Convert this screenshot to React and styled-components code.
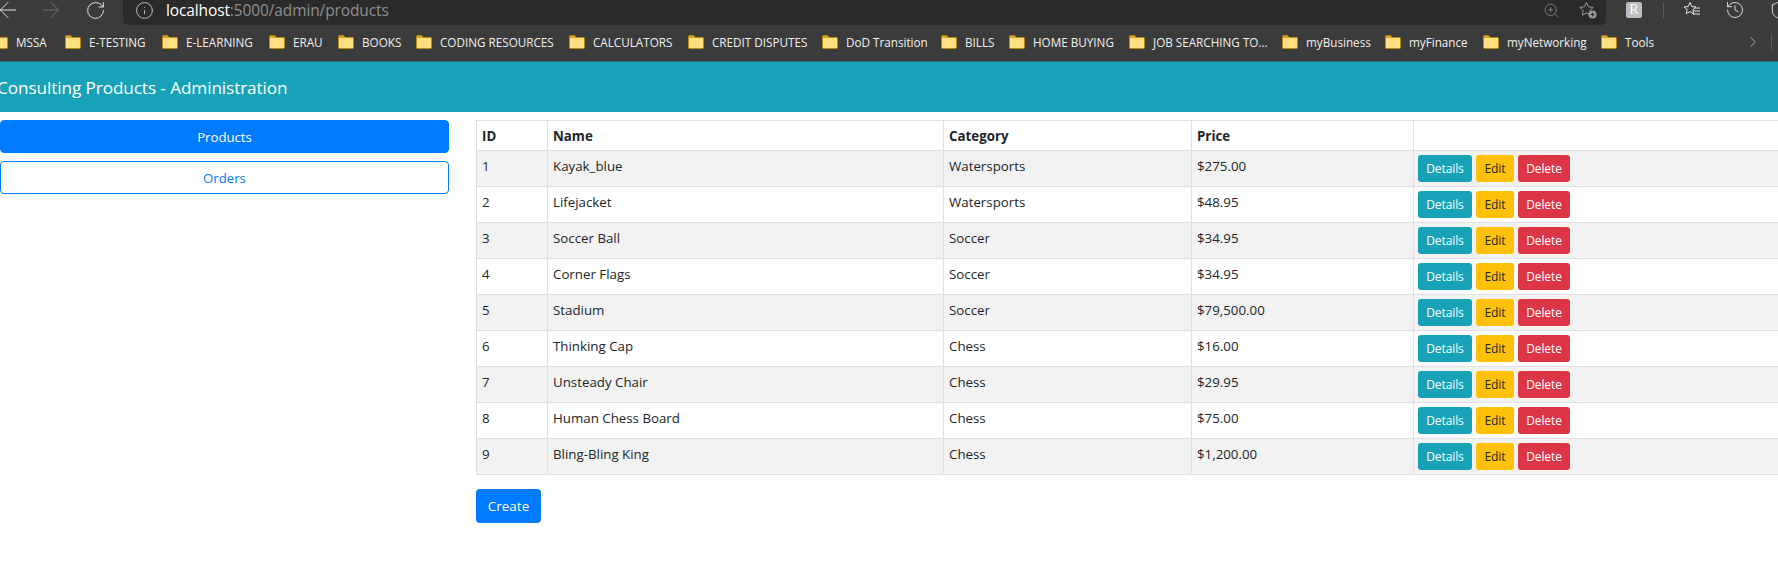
import React from 'react';
import styled, { createGlobalStyle } from 'styled-components';
import { ArrowLeft, ArrowRight, RotateCw, Info, ZoomIn, ChevronRight, History, Shield } from 'lucide-react';

const GlobalStyle = createGlobalStyle`
  html, body {
    margin: 0;
    padding: 0;
    height: 100%;
    overflow: hidden;
    background: #fff;
  }
  body {
    font-family: "Open Sans", "Noto Sans", "Liberation Sans", sans-serif;
    color: #212529;
  }
`;

const Page = styled.div`
  width: 1778px;
  height: 575px;
  overflow: hidden;
`;

const TopBar = styled.div`
  display: flex;
  align-items: flex-start;
  height: 25px;
  background: #3b3b3b;
`;

const NavIcons = styled.div`
  display: flex;
  align-items: center;
  width: 123px;
  height: 20px;
  flex: none;
`;

const NavIcon = styled.span`
  display: flex;
  width: ${(p) => p.$w}px;
  flex: none;
  margin-left: ${(p) => p.$shift || 0}px;
  color: ${(p) => p.$color || '#e6e6e6'};
`;

const AddressBar = styled.div`
  display: flex;
  align-items: center;
  width: 1483px;
  height: 25px;
  flex: none;
  padding: 0 9px 5px 12px;
  box-sizing: border-box;
  background: #2a2a2a;
  border-radius: 0 0 5px 5px;
`;

const Url = styled.div`
  flex: 1;
  margin-left: 12px;
  font-size: 15.5px;
  letter-spacing: -0.12px;
  color: #8f8f8f;
  b {
    font-weight: 400;
    color: #fff;
  }
`;

const AddressIcons = styled.div`
  display: flex;
  align-items: center;
  gap: 19px;
  color: #9a9a9a;
`;

const ToolIcons = styled.div`
  display: flex;
  align-items: center;
  height: 20px;
  padding-left: 20px;
  color: #e6e6e6;
`;

const ProfileTile = styled.span`
  display: flex;
  align-items: center;
  justify-content: center;
  width: 16px;
  height: 16px;
  border-radius: 2px;
  background: #bdbdbd;
  color: #fff;
  font-family: "Liberation Serif", serif;
  font-size: 14px;
  font-weight: 400;
`;

const ToolDivider = styled.span`
  width: 1px;
  height: 16px;
  margin: 0 19px 0 21px;
  background: #5a5a5a;
`;

const ToolSlot = styled.span`
  display: flex;
  width: ${(p) => p.$w}px;
  flex: none;
`;

const BookmarksBar = styled.div`
  display: flex;
  align-items: center;
  height: 37px;
  padding-bottom: 2px;
  box-sizing: border-box;
  background: #3b3b3b;
  border-bottom: 1px solid #2e6f7c;
`;

const BookmarkList = styled.div`
  display: flex;
  align-items: center;
  width: 1752px;
  margin-left: -8px;
  flex: none;
`;

const Bookmark = styled.div`
  display: flex;
  align-items: center;
  gap: 8px;
  width: ${(p) => p.$w}px;
  flex: none;
  font-size: 11.7px;
  color: #f0f0f0;
  white-space: nowrap;
`;

const BarEnd = styled.div`
  display: flex;
  align-items: center;
  color: #b5b5b5;
`;

const BarEndDivider = styled.span`
  width: 1px;
  height: 16px;
  margin-left: 9px;
  background: #5a5a5a;
`;

const Banner = styled.header`
  height: 50px;
  display: flex;
  align-items: center;
  background: #17a2b8;
  color: #fff;
  box-sizing: border-box;
`;

const BannerTitle = styled.div`
  margin-left: -3px;
  font-size: 17.2px;
  letter-spacing: -0.1px;
  white-space: nowrap;
`;

const Main = styled.main`
  display: flex;
  align-items: flex-start;
  gap: 27px;
  padding-top: 8px;
`;

const Sidebar = styled.nav`
  display: flex;
  flex-direction: column;
  gap: 8px;
  width: 449px;
  flex: none;
`;

const NavButton = styled.a`
  display: flex;
  align-items: center;
  justify-content: center;
  height: 33px;
  box-sizing: border-box;
  border-radius: 4px;
  border: 1px solid #007bff;
  background: ${(p) => (p.$active ? '#007bff' : '#fff')};
  color: ${(p) => (p.$active ? '#fff' : '#007bff')};
  font-size: 13.2px;
`;

const Content = styled.section`
  width: 1302px;
  flex: none;
`;

const Table = styled.table`
  width: 1330px;
  table-layout: fixed;
  border-collapse: collapse;
  font-size: 13.3px;
`;

const Th = styled.th`
  height: 29px;
  padding: 0 5px;
  border: 1px solid #dee2e6;
  text-align: left;
  font-weight: 700;
  color: #212529;
`;

const Row = styled.tr`
  height: 36px;
  background: ${(p) => (p.$odd ? '#f2f2f2' : '#fff')};
`;

const Td = styled.td`
  padding: 0 5px 6px;
  border: 1px solid #dee2e6;
  color: #212529;
`;

const ActionCell = styled.td`
  padding: 0 4px;
  border: 1px solid #dee2e6;
`;

const Actions = styled.div`
  display: flex;
  gap: 4px;
`;

const SmallButton = styled.button`
  height: 27px;
  width: ${(p) => p.$w}px;
  padding: 0;
  border: 0;
  border-radius: 3px;
  font-family: inherit;
  font-size: 12px;
  letter-spacing: -0.1px;
  background: ${(p) => p.$bg};
  color: ${(p) => p.$fg || '#fff'};
`;

const CreateButton = styled.button`
  display: block;
  width: 65px;
  height: 34px;
  margin-top: 14px;
  padding: 0;
  border: 0;
  border-radius: 4px;
  background: #007bff;
  color: #fff;
  font-family: inherit;
  font-size: 13.5px;
`;

const FolderIcon = () => (
  <svg width="16" height="14" viewBox="0 0 16 14" style={{ flex: 'none' }}>
    <path d="M.5 1.5C.5 1 1 .5 1.500.5h4l1.500 2h7.500c.6 0 1 .4 1 1v9c0 .6-.4 1-1 1h-13c-.6 0-1-.4-1-1z" fill="#ffdf80" stroke="#b8890f" />
    <path d="M1 3h6l-1.500-2H1z" fill="#d9a520" />
  </svg>
);

const FavAddIcon = () => (
  <svg width="18" height="18" viewBox="0 0 18 18" fill="none">
    <path d="M7.500 1.500l2 4.300 4.700.6-3.400 3.200.9 4.600-4.200-2.300-4.200 2.300.9-4.600L.8 6.400l4.700-.6z" stroke="#9a9a9a" />
    <circle cx="13.500" cy="13.500" r="4" fill="#9a9a9a" />
    <path d="M13.500 11.500v4M11.500 13.500h4" stroke="#2a2a2a" strokeWidth="1.200" />
  </svg>
);

const FavoritesIcon = () => (
  <svg width="18" height="18" viewBox="0 0 18 18" fill="none" stroke="currentColor">
    <path d="M7 1.500l1.800 4 4.200.5-3.100 2.900.8 4.300L7 10.600l-3.700 2.100.8-4.300L1 6l4.200-.5z" />
    <path d="M11.500 7H17M10.500 10H17M10.500 13H17" />
  </svg>
);

const bookmarks = [
  ['MSSA', 73], ['E-TESTING', 97], ['E-LEARNING', 107], ['ERAU', 69], ['BOOKS', 78],
  ['CODING RESOURCES', 153], ['CALCULATORS', 119], ['CREDIT DISPUTES', 134], ['DoD Transition', 119],
  ['BILLS', 68], ['HOME BUYING', 120], ['JOB SEARCHING TO...', 153], ['myBusiness', 103], ['myFinance', 98], ['myNetworking', 118], ['Tools', 60],
];

const products = [
  [1, 'Kayak_blue', 'Watersports', '$275.00'],
  [2, 'Lifejacket', 'Watersports', '$48.95'],
  [3, 'Soccer Ball', 'Soccer', '$34.95'],
  [4, 'Corner Flags', 'Soccer', '$34.95'],
  [5, 'Stadium', 'Soccer', '$79,500.00'],
  [6, 'Thinking Cap', 'Chess', '$16.00'],
  [7, 'Unsteady Chair', 'Chess', '$29.95'],
  [8, 'Human Chess Board', 'Chess', '$75.00'],
  [9, 'Bling-Bling King', 'Chess', '$1,200.00'],
];

const App = () => (
  <Page>
    <GlobalStyle />
    <TopBar>
      <NavIcons>
        <NavIcon $w={43} $shift={-5}><ArrowLeft size={26} strokeWidth={0.9} /></NavIcon>
        <NavIcon $w={47} $color="#6f6f6f"><ArrowRight size={26} strokeWidth={0.9} /></NavIcon>
        <NavIcon $w={21}><RotateCw size={21} strokeWidth={1.1} /></NavIcon>
      </NavIcons>
      <AddressBar>
        <Info size={19} strokeWidth={1.1} color="#cfcfcf" />
        <Url><b>localhost</b>:5000/admin/products</Url>
        <AddressIcons>
          <ZoomIn size={17} strokeWidth={1} />
          <FavAddIcon />
        </AddressIcons>
      </AddressBar>
      <ToolIcons>
        <ProfileTile>R</ProfileTile>
        <ToolDivider />
        <ToolSlot $w={42}><FavoritesIcon /></ToolSlot>
        <ToolSlot $w={44}><History size={20} strokeWidth={1.1} /></ToolSlot>
        <ToolSlot $w={20}><Shield size={20} strokeWidth={1.1} /></ToolSlot>
      </ToolIcons>
    </TopBar>
    <BookmarksBar>
      <BookmarkList>
        {bookmarks.map(([label, w]) => (
          <Bookmark key={label} $w={w}><FolderIcon />{label}</Bookmark>
        ))}
      </BookmarkList>
      <BarEnd>
        <ChevronRight size={18} strokeWidth={1.2} />
        <BarEndDivider />
      </BarEnd>
    </BookmarksBar>
    <Banner>
      <BannerTitle>Consulting Products - Administration</BannerTitle>
    </Banner>
    <Main>
      <Sidebar>
        <NavButton $active>Products</NavButton>
        <NavButton>Orders</NavButton>
      </Sidebar>
      <Content>
        <Table>
          <colgroup>
            <col style={{ width: 71 }} />
            <col style={{ width: 396 }} />
            <col style={{ width: 248 }} />
            <col style={{ width: 222 }} />
            <col />
          </colgroup>
          <thead>
            <tr>
              <Th>ID</Th>
              <Th>Name</Th>
              <Th>Category</Th>
              <Th>Price</Th>
              <Th />
            </tr>
          </thead>
          <tbody>
            {products.map(([id, name, category, price]) => (
              <Row key={id} $odd={id % 2 === 1}>
                <Td>{id}</Td>
                <Td>{name}</Td>
                <Td>{category}</Td>
                <Td>{price}</Td>
                <ActionCell>
                  <Actions>
                    <SmallButton $w={54} $bg="#17a2b8">Details</SmallButton>
                    <SmallButton $w={38} $bg="#ffc107" $fg="#212529">Edit</SmallButton>
                    <SmallButton $w={52} $bg="#dc3545">Delete</SmallButton>
                  </Actions>
                </ActionCell>
              </Row>
            ))}
          </tbody>
        </Table>
        <CreateButton>Create</CreateButton>
      </Content>
    </Main>
  </Page>
);

export default App;
